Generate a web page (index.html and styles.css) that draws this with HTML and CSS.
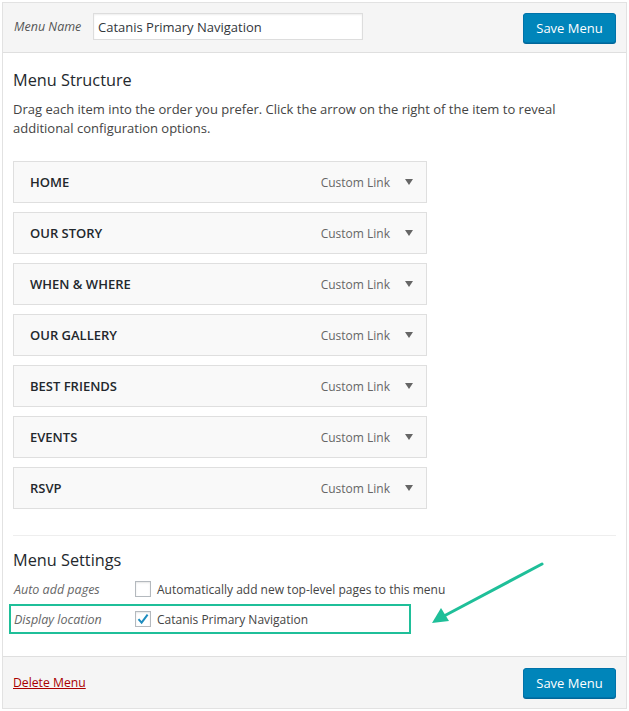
FILE: index.html
```html
<!DOCTYPE html>
<html>
<head>
<meta charset="utf-8">
<link rel="stylesheet" href="styles.css">
</head>
<body>
<div class="menu-edit">
  <div class="menu-header">
    <label class="name-label">Menu Name</label>
    <input class="name-input" type="text" value="Catanis Primary Navigation">
    <button class="btn-primary">Save Menu</button>
  </div>
  <div class="menu-body">
    <h3 class="section-title">Menu Structure</h3>
    <p class="desc">Drag each item into the order you prefer. Click the arrow on the right of the item to reveal additional configuration options.</p>
    <ul class="menu-items">
      <li class="menu-item"><span class="item-title">HOME</span><span class="item-type">Custom Link</span><span class="caret"></span></li>
      <li class="menu-item"><span class="item-title">OUR STORY</span><span class="item-type">Custom Link</span><span class="caret"></span></li>
      <li class="menu-item"><span class="item-title">WHEN &amp; WHERE</span><span class="item-type">Custom Link</span><span class="caret"></span></li>
      <li class="menu-item"><span class="item-title">OUR GALLERY</span><span class="item-type">Custom Link</span><span class="caret"></span></li>
      <li class="menu-item"><span class="item-title">BEST FRIENDS</span><span class="item-type">Custom Link</span><span class="caret"></span></li>
      <li class="menu-item"><span class="item-title">EVENTS</span><span class="item-type">Custom Link</span><span class="caret"></span></li>
      <li class="menu-item"><span class="item-title">RSVP</span><span class="item-type">Custom Link</span><span class="caret"></span></li>
    </ul>
    <div class="settings">
      <h3 class="section-title settings-title">Menu Settings</h3>
      <div class="setting-row">
        <span class="setting-label">Auto add pages</span>
        <span class="checkbox"></span>
        <span class="setting-text">Automatically add new top-level pages to this menu</span>
      </div>
      <div class="setting-row highlighted">
        <span class="setting-label">Display location</span>
        <span class="checkbox"><svg class="check" viewBox="0 0 16 16" width="16" height="16"><path d="M3.5 8.2 L6.6 11.6 L12.6 3.6" fill="none" stroke="#1e8cbe" stroke-width="2"/></svg></span>
        <span class="setting-text">Catanis Primary Navigation</span>
      </div>
    </div>
  </div>
  <div class="menu-footer">
    <a class="delete-link" href="#">Delete Menu</a>
    <button class="btn-primary">Save Menu</button>
  </div>
</div>
<svg class="pointer" width="629" height="711" viewBox="0 0 629 711">
  <line x1="542" y1="564" x2="444" y2="616" stroke="#1fbf99" stroke-width="3" stroke-linecap="round"/>
  <polygon points="432,623 441,608 449,621" fill="#1fbf99"/>
</svg>
</body>
</html>
```

FILE: styles.css
```css
* { box-sizing: border-box; }
html, body { margin: 0; padding: 0; background: #fff; }
body {
  font-family: "Open Sans", "Liberation Sans", sans-serif;
  font-size: 13px;
  color: #444;
  position: relative;
}
.menu-edit {
  margin: 2px;
  border: 1px solid #e2e2e2;
  height: 707px;
  display: flex;
  flex-direction: column;
}
.menu-header {
  background: #f5f5f5;
  border-bottom: 1px solid #dfdfdf;
  height: 50px;
  display: flex;
  align-items: center;
  padding: 0 10px 0 11px;
}
.name-label {
  font-style: italic;
  color: #555;
  font-size: 12.5px;
  width: 79px;
  margin-top: -2px;
}
.name-input {
  width: 270px;
  height: 27px;
  border: 1px solid #ddd;
  box-shadow: inset 0 1px 2px rgba(0,0,0,0.07);
  font-family: inherit;
  font-size: 13px;
  color: #32373c;
  padding: 0 4px;
  margin: -2px 0 0;
  outline: none;
}
.btn-primary {
  margin-left: auto;
  background: #0085ba;
  border: 1px solid #0073aa;
  border-radius: 3px;
  box-shadow: 0 1px 0 #006799;
  color: #fff;
  font-family: inherit;
  font-size: 13px;
  height: 30px;
  width: 93px;
  padding: 0;
  cursor: pointer;
}
.menu-body {
  flex: 1;
  padding: 0 10px;
}
.section-title {
  font-size: 16.3px;
  font-weight: 400;
  color: #23282d;
  margin: 15px 0 0;
  line-height: 24px;
}
.desc {
  margin: 8px 0 0;
  line-height: 19px;
  color: #444;
  width: 560px;
}
.menu-items {
  list-style: none;
  margin: 23px 0 0;
  padding: 0;
  width: 414px;
}
.menu-item {
  height: 42px;
  margin-bottom: 9px;
  border: 1px solid #dfdfdf;
  background: #f9f9f9;
  display: flex;
  align-items: center;
  padding: 0 13px 0 16px;
}
.item-title {
  font-weight: 600;
  color: #23282d;
  font-size: 13px;
}
.item-type {
  margin-left: auto;
  color: #666;
  font-size: 12px;
}
.caret {
  width: 0;
  height: 0;
  border-left: 4px solid transparent;
  border-right: 4px solid transparent;
  border-top: 6px solid #666;
  margin-left: 15px;
}
.settings {
  border-top: 1px solid #eee;
  margin-top: 26px;
}
.settings-title {
  margin: 12px 0 2px;
}
.setting-row {
  display: flex;
  align-items: center;
  height: 30px;
  margin-left: -4px;
  padding-left: 5px;
  font-size: 12px;
}
.setting-label {
  font-style: italic;
  color: #666;
  font-size: 12.5px;
  width: 121px;
}
.checkbox {
  width: 16px;
  height: 16px;
  border: 1px solid #b4b9be;
  background: #fff;
  box-shadow: inset 0 1px 2px rgba(0,0,0,0.1);
  margin-right: 6px;
  display: flex;
  position: relative;
}
.check {
  position: absolute;
  left: -1px;
  top: -1px;
}
.setting-text { color: #444; }
.highlighted {
  border: 2px solid #1fbf99;
  padding-left: 3px;
  width: 402px;
}
.pointer {
  position: absolute;
  left: 0;
  top: 0;
  pointer-events: none;
}
.menu-footer {
  background: #f5f5f5;
  border-top: 1px solid #dfdfdf;
  height: 52px;
  display: flex;
  align-items: center;
  padding: 0 10px;
}
.delete-link {
  color: #a00;
  text-decoration: underline;
  font-size: 12.2px;
}
```
